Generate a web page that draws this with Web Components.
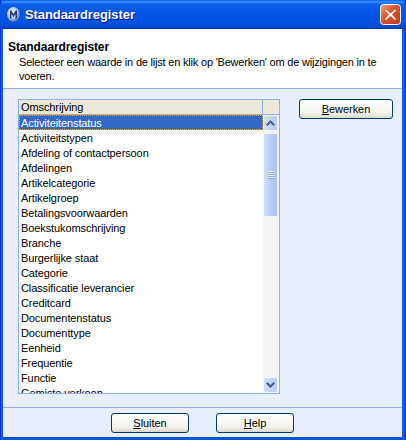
<!DOCTYPE html>
<html>
<head>
<meta charset="utf-8">
<title>Standaardregister</title>
<style>
  html, body { margin: 0; padding: 0; background: #0831d9; }
  body { font: 11px "Liberation Sans", Arial, sans-serif; color: #000; }
</style>
</head>
<body>
<xp-window heading="Standaardregister">
  <xp-header heading="Standaardregister">Selecteer een waarde in de lijst en klik op 'Bewerken' om de wijzigingen in te voeren.</xp-header>
  <div slot="main" style="display:flex; align-items:flex-start; gap:19px;">
    <xp-list heading="Omschrijving">
      <xp-row selected>Activiteitenstatus</xp-row>
      <xp-row>Activiteitstypen</xp-row>
      <xp-row>Afdeling of contactpersoon</xp-row>
      <xp-row>Afdelingen</xp-row>
      <xp-row>Artikelcategorie</xp-row>
      <xp-row>Artikelgroep</xp-row>
      <xp-row>Betalingsvoorwaarden</xp-row>
      <xp-row>Boekstukomschrijving</xp-row>
      <xp-row>Branche</xp-row>
      <xp-row>Burgerlijke staat</xp-row>
      <xp-row>Categorie</xp-row>
      <xp-row>Classificatie leverancier</xp-row>
      <xp-row>Creditcard</xp-row>
      <xp-row>Documentenstatus</xp-row>
      <xp-row>Documenttype</xp-row>
      <xp-row>Eenheid</xp-row>
      <xp-row>Frequentie</xp-row>
      <xp-row>Functie</xp-row>
      <xp-row>Gemiste verkoop</xp-row>
    </xp-list>
    <xp-button key="B" rest="ewerken" style="width:94px"></xp-button>
  </div>
  <xp-button slot="footer" key="S" rest="luiten"></xp-button>
  <xp-button slot="footer" key="H" rest="elp"></xp-button>
</xp-window>

<script>
class XpWindow extends HTMLElement {
  constructor() {
    super();
    const root = this.attachShadow({ mode: "open" });
    root.innerHTML = `
      <style>
        :host { display: flex; flex-direction: column; width: 406px; height: 440px; overflow: hidden;
          background: linear-gradient(90deg, #0831d9 0, #0831d9 1px, #166aee 1px, #0855dd 3px, #0855dd 402px, #166aee 404px, #0831d9 405px); }
        .title { height: 29px; flex: none; display: flex; align-items: center; padding: 0 5px 0 7px; gap: 5px;
          background: linear-gradient(180deg, #0058ee 0%, #3a93ff 6%, #0a5fe8 14%, #0055e5 50%, #0053e0 80%, #0049cc 92%, #003dae 100%);
          border-radius: 7px 7px 0 0; }
        .title b { flex: 1; color: #fff; font: bold 13px "Liberation Sans", Arial, sans-serif;
          letter-spacing: -.08px; text-shadow: 1px 1px 0 #0f1089; }
        .close { width: 21px; height: 21px; display: block; }
        .logo { width: 13px; height: 15px; display: block; }
        .body { flex: 1; min-height: 0; display: flex; flex-direction: column; margin: 0 4px 3px 3px;
          background: #e8eefc; }
        .main { flex: 1; min-height: 0; padding: 10px 0 0 15px; border-bottom: 1px solid #8fb0f0; overflow: hidden; }
        .footer { height: 29px; flex: none; display: flex; justify-content: center; align-items: center; gap: 27px;
          padding: 1px 0 0; box-sizing: border-box; }
      </style>
      <div class="title">
        <svg class="logo" viewBox="0 0 13 15">
          <defs><radialGradient id="g" cx=".4" cy=".35" r=".7"><stop offset="0" stop-color="#f4f8ff"/><stop offset=".6" stop-color="#a9bfe8"/><stop offset="1" stop-color="#3c5a9e"/></radialGradient></defs>
          <ellipse cx="6.500" cy="7.500" rx="6.500" ry="7.500" fill="url(#g)"/>
          <path d="M3 11.500V3.500h1.400L6.500 7l2.100-3.500H10v8H8.500V7L6.500 10 4.500 7v4.500z" fill="#27407e"/>
        </svg>
        <b id="t"></b>
        <svg class="close" viewBox="0 0 21 21">
          <defs><linearGradient id="r" x1="0" y1="0" x2="1" y2="1"><stop offset="0" stop-color="#f0a080"/><stop offset=".4" stop-color="#dd5b34"/><stop offset="1" stop-color="#bf3410"/></linearGradient></defs>
          <rect x=".5" y=".5" width="20" height="20" rx="3" fill="url(#r)" stroke="#fff"/>
          <path d="M6 5.500l4.500 4 4.500-4 1 1-4 4 4 4.500-1 1-4.500-4-4.500 4-1-1 4-4.500-4-4z" fill="#fff"/>
        </svg>
      </div>
      <div class="body">
        <slot></slot>
        <div class="main"><slot name="main"></slot></div>
        <div class="footer"><slot name="footer"></slot></div>
      </div>`;
    root.getElementById("t").textContent = this.getAttribute("heading");
  }
}

class XpHeader extends HTMLElement {
  constructor() {
    super();
    const root = this.attachShadow({ mode: "open" });
    root.innerHTML = `
      <style>
        :host { display: block; height: 60px; box-sizing: border-box; background: #fff;
          border-bottom: 1px solid #8fb0f0; padding: 11px 0 0 5px; }
        b { display: block; font-size: 12px; line-height: 15px; letter-spacing: -.1px; }
        p { margin: 0 0 0 11px; width: 366px; line-height: 14px; font-size: 11px; letter-spacing: -.2px; }
      </style>
      <b id="h"></b><p><slot></slot></p>`;
    root.getElementById("h").textContent = this.getAttribute("heading");
  }
}

class XpList extends HTMLElement {
  constructor() {
    super();
    const root = this.attachShadow({ mode: "open" });
    root.innerHTML = `
      <style>
        :host { display: block; width: 262px; height: 295px; flex: none; box-sizing: border-box;
          border: 1px solid #8fb0f0; background: #fff; position: relative; overflow: hidden; }
        .head { display: flex; height: 15px; box-sizing: border-box; background: #ebe8d9; border-bottom: 1px solid #8fb0f0; }
        .head span { flex: 1; padding-left: 2px; line-height: 15px; letter-spacing: -.1px; border-right: 1px solid #8fb0f0; }
        .head i { width: 16px; }
        .rows { display: flex; }
        .items { flex: 1; min-width: 0; }
        .bar { width: 16px; height: 278px; flex: none; display: flex; flex-direction: column;
          box-sizing: border-box; background: #f4f4f0; }
        .btn { height: 16px; width: 15px; flex: none; box-sizing: border-box; display: flex; align-items: center; justify-content: center;
          background: linear-gradient(90deg, #d2dffb, #b5cbf8); border: 1px solid #f4f7ff; border-radius: 2px; }
        .thumb { height: 84px; margin: 2px 0 0; width: 15px; flex: none; box-sizing: border-box; display: flex; align-items: center; justify-content: center;
          background: linear-gradient(90deg, #cfdcfb, #b9cdf9 50%, #a9c0f4); border: 1px solid #f4f7ff; border-radius: 2px; }
        .gap { flex: 1; }
      </style>
      <div class="head"><span id="h"></span><i></i></div>
      <div class="rows">
        <div class="items"><slot></slot></div>
        <div class="bar">
          <div class="btn"><svg width="9" height="6" viewBox="0 0 9 6"><path d="M0 4.500L4.500 0 9 4.500 7.500 6 4.500 3 1.500 6z" fill="#4d6185"/></svg></div>
          <div class="thumb"><svg width="8" height="8" viewBox="0 0 8 8"><path d="M1 .5h6M1 2.500h6M1 4.500h6M1 6.500h6" stroke="#eef3ff" stroke-width="1"/><path d="M1 1.500h6M1 3.500h6M1 5.500h6M1 7.500h6" stroke="#8ca8e6" stroke-width="1"/></svg></div>
          <div class="gap"></div>
          <div class="btn"><svg width="9" height="6" viewBox="0 0 9 6"><path d="M0 1.500L1.500 0 4.500 3 7.500 0 9 1.500 4.500 6z" fill="#4d6185"/></svg></div>
        </div>
      </div>`;
    root.getElementById("h").textContent = this.getAttribute("heading");
  }
}

class XpRow extends HTMLElement {
  constructor() {
    super();
    const root = this.attachShadow({ mode: "open" });
    root.innerHTML = `
      <style>
        :host { display: block; height: 15px; line-height: 15px; padding: 1px 0 0 2px; letter-spacing: -.1px; white-space: nowrap; box-sizing: border-box; }
        :host([selected]) { background: #316ac5; color: #fff; outline: 1px dotted #e8a040; outline-offset: -1px; }
      </style>
      <slot></slot>`;
  }
}

class XpButton extends HTMLElement {
  constructor() {
    super();
    const root = this.attachShadow({ mode: "open" });
    root.innerHTML = `
      <style>
        :host { display: flex; width: 78px; height: 20px; flex: none; box-sizing: border-box; align-items: center; justify-content: center;
          border: 1px solid #003c74; border-radius: 3px; letter-spacing: -.05px;
          background: linear-gradient(180deg, #fff 0%, #f5f4ee 70%, #dcd8cc 100%); }
        u { text-decoration: underline; }
      </style>
      <span><u id="k"></u><span id="r"></span></span>`;
    root.getElementById("k").textContent = this.getAttribute("key");
    root.getElementById("r").textContent = this.getAttribute("rest");
  }
}

customElements.define("xp-window", XpWindow);
customElements.define("xp-header", XpHeader);
customElements.define("xp-list", XpList);
customElements.define("xp-row", XpRow);
customElements.define("xp-button", XpButton);
</script>
</body>
</html>
